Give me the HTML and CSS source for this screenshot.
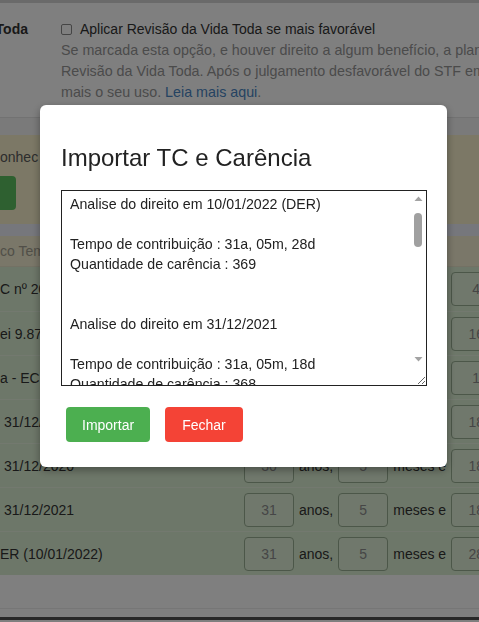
FILE: index.html
```html
<!DOCTYPE html>
<html lang="pt-BR">
<head>
<meta charset="utf-8">
<title>Importar TC e Carência</title>
<link rel="stylesheet" href="styles.css">
</head>
<body>
<div class="page">
  <div class="top-strip"></div>
  <section class="opt">
    <div class="opt-label"><span>Revisão da Vida Toda</span></div>
    <div class="opt-body">
      <div class="check-line"><span class="checkbox"></span><span>Aplicar Revisão da Vida Toda se mais favorável</span></div>
      <div class="help">
        <div>Se marcada esta opção, e houver direito a algum benefício, a planilha irá considerar a</div>
        <div>Revisão da Vida Toda. Após o julgamento desfavorável do STF em 21/03/2024, não recomendamos</div>
        <div>mais o seu uso. <a href="#">Leia mais aqui</a>.</div>
      </div>
    </div>
  </section>
  <div class="sep"></div>
  <section class="panel">
    <div class="panel-text">onhec</div>
    <div class="panel-btn"></div>
  </section>
  <div class="strip"></div>
  <div class="thead">co Tem</div>
  <div class="rows">
    <div class="row"><span class="row-label">C nº 20/98</span><input class="box" value="20" readonly><span class="unit">anos,</span><input class="box" value="3" readonly><span class="unit">meses e</span><input class="box" value="4" readonly></div>
    <div class="row"><span class="row-label">ei 9.876/99</span><input class="box" value="21" readonly><span class="unit">anos,</span><input class="box" value="2" readonly><span class="unit">meses e</span><input class="box" value="16" readonly></div>
    <div class="row"><span class="row-label">a - EC 103/19</span><input class="box" value="29" readonly><span class="unit">anos,</span><input class="box" value="4" readonly><span class="unit">meses e</span><input class="box" value="1" readonly></div>
    <div class="row"><span class="row-label pad">31/12/2019</span><input class="box" value="29" readonly><span class="unit">anos,</span><input class="box" value="5" readonly><span class="unit">meses e</span><input class="box" value="18" readonly></div>
    <div class="row"><span class="row-label pad">31/12/2020</span><input class="box" value="30" readonly><span class="unit">anos,</span><input class="box" value="5" readonly><span class="unit">meses e</span><input class="box" value="18" readonly></div>
    <div class="row"><span class="row-label pad">31/12/2021</span><input class="box" value="31" readonly><span class="unit">anos,</span><input class="box" value="5" readonly><span class="unit">meses e</span><input class="box" value="18" readonly></div>
    <div class="row"><span class="row-label">ER (10/01/2022)</span><input class="box" value="31" readonly><span class="unit">anos,</span><input class="box" value="5" readonly><span class="unit">meses e</span><input class="box" value="28" readonly></div>
  </div>
  <div class="foot"></div>
  <div class="bottom-bar"></div>
</div>

<div class="overlay"></div>

<div class="modal" role="dialog" aria-labelledby="modal-title">
  <h2 id="modal-title" class="modal-title">Importar TC e Carência</h2>
  <div class="notes-wrap">
    <textarea class="notes" wrap="off">Analise do direito em 10/01/2022 (DER)

Tempo de contribuição : 31a, 05m, 28d
Quantidade de carência : 369


Analise do direito em 31/12/2021

Tempo de contribuição : 31a, 05m, 18d
Quantidade de carência : 368


Analise do direito em 31/12/2020

Tempo de contribuição : 30a, 05m, 18d
Quantidade de carência : 356


Analise do direito em 31/12/2019

Tempo de contribuição : 29a, 05m, 18d
Quantidade de carência : 344


Analise do direito em 13/11/2019 (EC 103/19)

Tempo de contribuição : 29a, 04m, 01d
Quantidade de carência : 343


Analise do direito em 28/11/1999 (Lei 9.876/99)

Tempo de contribuição : 21a, 02m, 16d
Quantidade de carência : 242


Analise do direito em 16/12/1998 (EC 20/98)

Tempo de contribuição : 20a, 03m, 04d
Quantidade de carência : 230</textarea>
    <div class="vscroll" aria-hidden="true">
      <svg class="arrow" width="15" height="15" viewBox="0 0 15 15"><path d="M3.5 10L7.5 5.5L11.5 10Z" fill="#a3a3a3"/></svg>
      <div class="track"><div class="thumb"></div></div>
      <svg class="arrow" width="15" height="15" viewBox="0 0 15 15"><path d="M3.5 5L11.5 5L7.5 9.5Z" fill="#a3a3a3"/></svg>
    </div>
  </div>
  <div class="actions">
    <button class="btn btn-green" type="button">Importar</button>
    <button class="btn btn-red" type="button">Fechar</button>
  </div>
</div>
</body>
</html>
```

FILE: styles.css
```css
* { box-sizing: border-box; }

html, body {
  margin: 0;
  padding: 0;
}

body {
  width: 479px;
  height: 622px;
  overflow: hidden;
  font-family: "Liberation Sans", Arial, sans-serif;
  font-size: 14px;
  color: #333;
  background: #fff;
}

.page {
  width: 520px;
}

.top-strip {
  height: 3px;
  background: #d4d4d4;
}

.opt {
  display: flex;
  height: 114px;
  padding-top: 19px;
}

.opt-label {
  width: 61px;
  flex: none;
  display: flex;
  justify-content: flex-end;
  overflow: hidden;
  padding-right: 33px;
  font-weight: bold;
  white-space: nowrap;
  line-height: 15px;
}

.opt-body {
  flex: 1;
  min-width: 0;
  max-width: 418px;
  overflow: hidden;
  white-space: nowrap;
}

.check-line {
  display: flex;
  align-items: center;
  gap: 8px;
  line-height: 15px;
}

.checkbox {
  width: 11px;
  height: 11px;
  flex: none;
  border: 1px solid #8a8a8a;
  border-radius: 2px;
  background: #fff;
}

.help {
  margin-top: 3px;
  color: #969696;
  font-size: 14.3px;
  line-height: 21px;
}

.help a {
  color: #4a86c4;
  text-decoration: none;
}

.sep {
  height: 18px;
  background: #f4f4f4;
  border-top: 1px solid #e4e4e4;
}

.panel {
  height: 89px;
  padding-top: 12px;
  background: #f8f1cc;
}

.panel-text {
  line-height: 20px;
  color: #5a5a5a;
}

.panel-btn {
  width: 16px;
  height: 34px;
  margin-top: 9px;
  background: #5cc060;
  border-radius: 0 4px 4px 0;
}

.strip {
  height: 12px;
  background: #eceef8;
}

.thead {
  height: 31px;
  line-height: 31px;
  background: #f4eed2;
  color: #a29e90;
  border-bottom: 1px solid #e6e2c8;
}

.rows {
  background: #dbeed2;
}

.row {
  display: grid;
  grid-template-columns: 239px 50px auto 50px auto 50px;
  justify-content: start;
  column-gap: 5px;
  align-items: center;
  height: 44px;
  border-top: 1px solid #e6f3df;
}

.row:first-child {
  border-top: none;
}

.row-label {
  white-space: nowrap;
  overflow: hidden;
  color: #333;
}

.row-label.pad {
  padding-left: 4px;
}

.unit {
  color: #333;
  white-space: nowrap;
}

.box {
  width: 50px;
  height: 34px;
  margin: 0;
  padding: 0;
  border: 1px solid #98ae92;
  border-radius: 4px;
  background: #e0f1d9;
  text-align: center;
  font-family: "Liberation Sans", Arial, sans-serif;
  font-size: 14px;
  color: #8c8c8c;
}

.foot {
  height: 34px;
  background: #fff;
  border-bottom: 1px solid #ececec;
}

.bottom-bar {
  height: 11px;
  border-bottom: 3px solid #505050;
  background: #fff;
}

.overlay {
  position: fixed;
  inset: 0;
  background: rgba(0, 0, 0, 0.5);
}

.modal {
  position: fixed;
  top: 105px;
  left: 40px;
  width: 407px;
  height: 362px;
  padding: 0 19px 0 21px;
  background: #fff;
  border-radius: 6px;
  box-shadow: 0 3px 9px rgba(0, 0, 0, 0.35);
}

.modal-title {
  margin: 40px 0 19px;
  font-size: 24px;
  font-weight: normal;
  line-height: 26px;
  color: #222;
}

.notes-wrap {
  position: relative;
  width: 366px;
  height: 196px;
}

.notes {
  display: block;
  width: 100%;
  height: 100%;
  margin: 0;
  padding: 3px 24px 3px 8px;
  border: 1px solid #222;
  font-family: "Liberation Sans", Arial, sans-serif;
  font-size: 14.2px;
  line-height: 20px;
  color: #222;
  background: #fff;
  resize: vertical;
  overflow: hidden;
  outline: none;
}

.vscroll {
  position: absolute;
  top: 1px;
  right: 1px;
  bottom: 19px;
  width: 15px;
  display: flex;
  flex-direction: column;
  background: #fff;
}

.arrow {
  display: block;
  flex: none;
}

.track {
  flex: 1;
  padding-top: 7px;
}

.thumb {
  width: 8px;
  height: 34px;
  margin-left: 3px;
  border-radius: 4px;
  background: #a0a0a0;
}

.actions {
  display: flex;
  gap: 15px;
  margin-top: 21px;
  padding-left: 5px;
}

.btn {
  height: 35px;
  padding: 0 16px;
  border: none;
  border-radius: 4px;
  font-family: "Liberation Sans", Arial, sans-serif;
  font-size: 14px;
  color: #fff;
  cursor: pointer;
}

.btn-green {
  background: #4caf50;
}

.btn-red {
  padding: 0 17px;
  background: #f44336;
}
```
